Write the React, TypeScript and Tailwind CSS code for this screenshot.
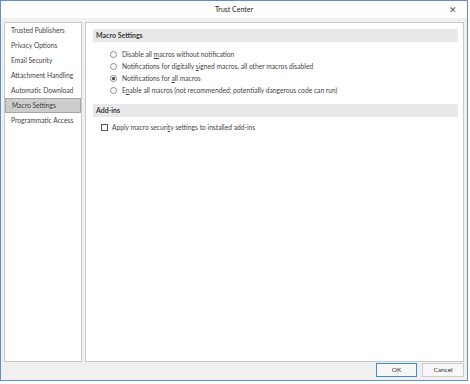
import React from "react";

const sidebarItems = [
  "Trusted Publishers",
  "Privacy Options",
  "Email Security",
  "Attachment Handling",
  "Automatic Download",
  "Macro Settings",
  "Programmatic Access",
];

const Radio = ({ checked = false }: { checked?: boolean }) => (
  <span className="flex h-[7px] w-[7px] shrink-0 items-center justify-center rounded-full border border-[#8a8a8a] bg-white">
    {checked && <span className="h-[3px] w-[3px] rounded-full bg-[#333]" />}
  </span>
);

const SectionHeader = ({ title }: { title: string }) => (
  <div className="flex h-[13px] items-center bg-[#e8e8e8] pl-[3px] text-[7px] font-bold text-[#3a3a3a]">
    {title}
  </div>
);

export default function App() {
  return (
    <div
      className="relative h-[384px] w-[470px] overflow-hidden whitespace-nowrap bg-white"
      style={{ fontFamily: 'Lato, "Open Sans", sans-serif' }}
    >
      <div className="flex h-[381px] w-[468px] flex-col border border-[#5f8fc8] bg-[#f0f0f0]">
        {/* title bar */}
        <div className="relative flex h-[17px] shrink-0 items-center justify-center bg-white text-[7px] text-[#222]">
          Trust Center
          <span className="absolute right-[10px] top-[4px] text-[9px] leading-none text-[#555]">✕</span>
        </div>

        {/* body */}
        <div className="flex flex-1 gap-[3px] px-[3px] pt-[4px]">
          <div className="w-[78px] border border-[#c8c8c8] bg-white">
            {sidebarItems.map((item) => (
              <div
                key={item}
                className={`flex h-[15px] items-center pl-[6px] text-[6.7px] text-[#444] ${
                  item === "Macro Settings"
                    ? "border border-[#a6a6a6] bg-[#cdcdcd] pl-[5px] text-[#222]"
                    : ""
                }`}
              >
                {item}
              </div>
            ))}
          </div>

          <div className="flex-1 border border-[#c8c8c8] bg-white px-[7px] pr-[5px] pt-[6px]">
            <SectionHeader title="Macro Settings" />
            <div className="mt-[6px] flex flex-col pl-[17px] text-[6.7px] text-[#444]">
              <div className="flex h-[12px] items-center gap-[5px]">
                <Radio />
                <span>
                  Disable all <u>m</u>acros without notification
                </span>
              </div>
              <div className="flex h-[12px] items-center gap-[5px]">
                <Radio />
                <span>
                  Notifications for digitally <u>s</u>igned macros, all other macros disabled
                </span>
              </div>
              <div className="flex h-[12px] items-center gap-[5px]">
                <Radio checked />
                <span>
                  Notifications for <u>a</u>ll macros
                </span>
              </div>
              <div className="flex h-[12px] items-center gap-[5px]">
                <Radio />
                <span>
                  E<u>n</u>able all macros (not recommended; potentially dangerous code can run)
                </span>
              </div>
            </div>

            <div className="mt-[8px]">
              <SectionHeader title="Add-ins" />
            </div>
            <div className="mt-[4px] flex h-[12px] items-center gap-[4px] pl-[8px] text-[6.7px] text-[#444]">
              <span className="h-[7px] w-[7px] shrink-0 border border-[#555] bg-white" />
              <span>
                Apply macro securi<u>t</u>y settings to installed add-ins
              </span>
            </div>
          </div>
        </div>

        {/* footer */}
        <div className="flex h-[18px] shrink-0 items-start justify-end gap-[5px] pr-[3px] pt-[1px]">
          <button className="flex h-[14px] w-[41px] items-center justify-center border border-[#3d8ad8] bg-[#f7f7f7] text-[6.5px] text-[#333]">
            OK
          </button>
          <button className="flex h-[14px] w-[42px] items-center justify-center border border-[#cccccc] bg-[#f7f7f7] text-[6.5px] text-[#333]">
            Cancel
          </button>
        </div>
      </div>
    </div>
  );
}
